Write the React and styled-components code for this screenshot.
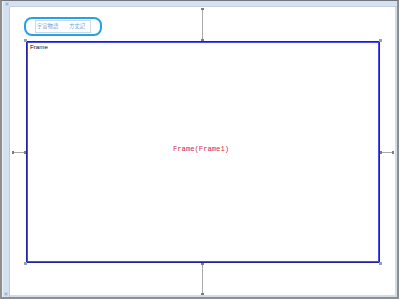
import React from "react";
import styled, { createGlobalStyle } from "styled-components";

const Global = createGlobalStyle`
  html, body { margin: 0; padding: 0; background: #fff; }
  body { font-family: "Liberation Sans", Arial, sans-serif; }
  * { box-sizing: border-box; }
`;

const Shell = styled.div`
  width: 400px;
  height: 300px;
  padding: 0 1px 1px 0;
  background: #fff;
`;

const Window = styled.div`
  width: 100%;
  height: 100%;
  display: grid;
  grid-template-columns: 8px 1fr;
  grid-template-rows: 6px 1fr;
  border-left: 2px solid #8e8e8e;
  border-top: 1px solid #70767e;
  border-right: 2px solid #8e8e8e;
  border-bottom: 2px solid #8e8e8e;
  background: #fff;
`;

const Ruler = styled.div`
  background: #d5e1ef;
  display: flex;
  flex-direction: column;
  justify-content: ${(p) => (p.$end ? "flex-end" : "flex-start")};
  align-items: ${(p) => (p.$end ? "center" : "stretch")};
  padding: ${(p) => (p.$end ? "0 0 1px 0" : "0")};
  border-left: ${(p) => (p.$side ? "1px solid #eef3f9" : "none")};
  border-right: ${(p) => (p.$side ? "1px solid #bccbdc" : "none")};
  border-bottom: ${(p) => (p.$top ? "1px solid #c3d1e2" : "none")};
`;

const Corner = styled.div`
  background: #d5e1ef;
  border-left: 1px solid #eef3f9;
  display: flex;
  align-items: center;
  justify-content: center;
`;

const Glyph = styled.span`
  width: 4px;
  height: 4px;
  background: #9fb6d2;
  border: 1px solid #c2d3e6;
`;

const Canvas = styled.div`
  position: relative;
  background: #fff;
  border-right: 2px solid #cfdcec;
  border-bottom: 2px solid #cfdcec;
`;

const Toolbar = styled.div`
  position: absolute;
  left: 14px;
  top: 10px;
  width: 78px;
  height: 19px;
  border: 2px solid #25a2e2;
  border-radius: 8px;
  display: flex;
  align-items: center;
  justify-content: center;
`;

const Tabs = styled.div`
  width: 56px;
  height: 13px;
  border: 1px solid #cad9ea;
  display: flex;
  align-items: center;
  gap: 11px;
  padding-left: 1px;
`;

const Tab = styled.span`
  font-family: "Noto Sans CJK JP", sans-serif;
  font-size: 5.3px;
  line-height: 1;
  color: #6f9fd6;
  white-space: nowrap;
`;

const FrameBox = styled.div`
  position: absolute;
  left: 16px;
  top: 34px;
  width: 354px;
  height: 222px;
  border: 1px solid #23239c;
  box-shadow: inset 0 0 0 1px #4b4bf2;
  display: flex;
  align-items: center;
  justify-content: center;
`;

const FrameLabel = styled.span`
  position: absolute;
  left: 3px;
  top: 2px;
  font-size: 6.2px;
  line-height: 1;
  color: #111;
`;

const FrameTitle = styled.span`
  font-family: "Liberation Mono", "Courier New", monospace;
  font-size: 7.2px;
  line-height: 1;
  color: #d3284a;
  margin: -5px 0 0 -4px;
`;

const Handle = styled.span`
  position: absolute;
  width: 3px;
  height: 3px;
  background: #8da3bb;
  ${(p) => (p.$r ? "right: -3px;" : "left: -3px;")}
  ${(p) => (p.$b ? "bottom: -3px;" : "top: -3px;")}
`;

const Dim = styled.div`
  position: absolute;
  display: flex;
  flex-direction: ${(p) => (p.$h ? "row" : "column")};
  align-items: center;
  justify-content: space-between;
  left: ${(p) => p.$x}px;
  top: ${(p) => p.$y}px;
  width: ${(p) => (p.$h ? p.$len : 3)}px;
  height: ${(p) => (p.$h ? 3 : p.$len)}px;
`;

const DimLine = styled.span`
  flex: 1;
  align-self: center;
  ${(p) => (p.$h ? "height: 1px;" : "width: 1px;")}
  background: #a9a9a9;
`;

const Cap = styled.span`
  flex: none;
  ${(p) => (p.$h ? "width: 2px; height: 3px;" : "width: 3px; height: 2px;")}
  background: #7d7d7d;
`;

function Dimension({ h, x, y, len }) {
  return (
    <Dim $h={h} $x={x} $y={y} $len={len}>
      <Cap $h={h} />
      <DimLine $h={h} />
      <Cap $h={h} />
    </Dim>
  );
}

export default function App() {
  return (
    <>
      <Global />
      <Shell>
        <Window>
          <Corner>
            <Glyph />
          </Corner>
          <Ruler $top />
          <Ruler $side $end>
            <Glyph />
          </Ruler>
          <Canvas>
            <Toolbar>
              <Tabs>
                <Tab>宇宙物語</Tab>
                <Tab>方丈記</Tab>
              </Tabs>
            </Toolbar>
            <Dimension x={191} y={1} len={33} />
            <Dimension x={191} y={256} len={32} />
            <Dimension h x={2} y={144} len={14} />
            <Dimension h x={370} y={144} len={14} />
            <FrameBox>
              <FrameLabel>Frame</FrameLabel>
              <FrameTitle>Frame(Frame1)</FrameTitle>
              <Handle />
              <Handle $r />
              <Handle $b />
              <Handle $r $b />
            </FrameBox>
          </Canvas>
        </Window>
      </Shell>
    </>
  );
}
